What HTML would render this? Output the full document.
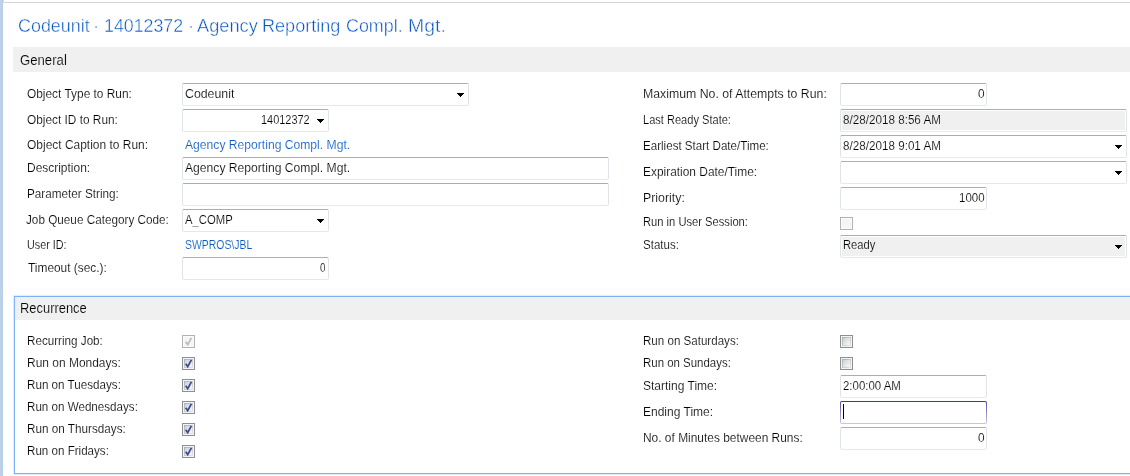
<!DOCTYPE html>
<html><head><meta charset="utf-8"><title>Job Queue Entry</title><style>
html,body{margin:0;padding:0;overflow:hidden}
.wrap{position:absolute;left:0;top:0;width:1130px;height:476px;overflow:hidden;background:#fff}
body{width:1130px;height:476px;background:#fff;overflow:hidden;position:relative;font-family:"Liberation Sans", sans-serif;}
.strip{position:absolute;left:0;top:0;width:3px;height:476px;background:linear-gradient(to right,#bdd1e8 0,#bdd1e8 2px,#b7cee9 2px,#b7cee9 3px)}
.topv{position:absolute;left:3px;top:0;width:1px;height:3px;background:#d9d9d9}
.toph{position:absolute;left:4px;top:2px;width:1126px;height:1px;background:#d5d5d5}
.bar{position:absolute;background:#f0f0f0}
.tl{position:absolute;left:0;top:0;width:1130px;height:476px;will-change:transform}
.rec{position:absolute;left:14px;top:296px;width:1130px;height:176px;border:1px solid #7db3f9;border-right:0;box-shadow:0 0 0 1px #e1edfe;box-sizing:content-box}
.t{position:absolute;white-space:pre;line-height:20px;transform-origin:0 0;letter-spacing:0}
.t{-webkit-text-stroke:0.15px #fff}
.t.title{-webkit-text-stroke-width:0.42px}
.t.ongray{-webkit-text-stroke-color:#f0f0f0}
.bx{position:absolute;box-sizing:border-box;background:#fff;border:1px solid #e1e3ea;border-top-color:#abadb3;border-bottom-color:#e3e9ef;border-radius:2px}
.bx.dis{background:#f0f0f0;box-shadow:inset 0 0 0 1px #fff}
.bx.foc{border-color:transparent;background:linear-gradient(#fff,#fff) padding-box,linear-gradient(to bottom,#3d3a90 0,#3d3a90 1px,#5957a6 2px,#c3c2e6 22px,#c9c8e8 23px) border-box}
.ar{position:absolute;display:block}
.caret{position:absolute;width:1px;height:15px;background:#000}
.cb{position:absolute;width:13px;height:13px;box-sizing:border-box;border:1px solid #8e8f8f;background:#f4f4f4}
.cb.on,.cb.off{background:#f4f4f4}
.cb.on::before,.cb.off::before{content:'';position:absolute;left:1px;top:1px;width:9px;height:9px;box-sizing:border-box;border:1px solid transparent;background:linear-gradient(135deg,#cdd1d6 0%,#e4e6e8 50%,#f7f7f7 100%) padding-box,linear-gradient(135deg,#a9aeb5 0%,#c3c6ca 45%,#e6e7e8 100%) border-box}
.cb.dis,.cb.dison{border-color:#b2b2b2;background:#f5f5f5;box-shadow:inset 0 0 0 1px #fbfbfb}
</style></head><body>
<div class="wrap">
<div class="strip"></div><div class="topv"></div><div class="toph"></div>
<div class="bar" style="left:13px;top:47px;width:1117px;height:25px"></div>
<div class="rec"></div>
<div class="bar" style="left:15px;top:297px;width:1115px;height:23px"></div>
<div class="bx " style="left:182px;top:83px;width:287px;height:23px"></div>
<svg class="ar" style="left:457px;top:93px" width="7" height="4" viewBox="0 0 7 4"><path d="M0 0H7V1H6V2H5V3H4V4H3V3H2V2H1V1H0Z" fill="#000" shape-rendering="crispEdges"/></svg>
<div class="bx " style="left:182px;top:109px;width:147px;height:23px"></div>
<svg class="ar" style="left:317px;top:119px" width="7" height="4" viewBox="0 0 7 4"><path d="M0 0H7V1H6V2H5V3H4V4H3V3H2V2H1V1H0Z" fill="#000" shape-rendering="crispEdges"/></svg>
<div class="bx " style="left:182px;top:157px;width:427px;height:23px"></div>
<div class="bx " style="left:182px;top:183px;width:427px;height:23px"></div>
<div class="bx " style="left:182px;top:209px;width:147px;height:23px"></div>
<svg class="ar" style="left:317px;top:219px" width="7" height="4" viewBox="0 0 7 4"><path d="M0 0H7V1H6V2H5V3H4V4H3V3H2V2H1V1H0Z" fill="#000" shape-rendering="crispEdges"/></svg>
<div class="bx " style="left:182px;top:257px;width:147px;height:23px"></div>
<div class="bx " style="left:840px;top:83px;width:147px;height:23px"></div>
<div class="bx dis" style="left:840px;top:109px;width:287px;height:23px"></div>
<div class="bx " style="left:840px;top:135px;width:287px;height:23px"></div>
<svg class="ar" style="left:1115px;top:145px" width="7" height="4" viewBox="0 0 7 4"><path d="M0 0H7V1H6V2H5V3H4V4H3V3H2V2H1V1H0Z" fill="#000" shape-rendering="crispEdges"/></svg>
<div class="bx " style="left:840px;top:161px;width:287px;height:23px"></div>
<svg class="ar" style="left:1115px;top:171px" width="7" height="4" viewBox="0 0 7 4"><path d="M0 0H7V1H6V2H5V3H4V4H3V3H2V2H1V1H0Z" fill="#000" shape-rendering="crispEdges"/></svg>
<div class="bx " style="left:840px;top:187px;width:147px;height:23px"></div>
<div class="bx dis" style="left:840px;top:235px;width:287px;height:23px"></div>
<svg class="ar" style="left:1115px;top:245px" width="7" height="4" viewBox="0 0 7 4"><path d="M0 0H7V1H6V2H5V3H4V4H3V3H2V2H1V1H0Z" fill="#000" shape-rendering="crispEdges"/></svg>
<div class="bx " style="left:840px;top:375px;width:147px;height:23px"></div>
<div class="bx foc" style="left:840px;top:401px;width:147px;height:23px"></div>
<div class="caret" style="left:843px;top:404px"></div>
<div class="bx " style="left:840px;top:427px;width:147px;height:23px"></div>
<div class="cb dis" style="left:840px;top:217px"></div>
<div class="cb dison" style="left:182px;top:335px"><svg width="13" height="13" viewBox="0 0 13 13" style="position:absolute;left:-1px;top:-1px"><path d="M3.7 6.7 L5.7 9.6 L9.4 2.8" fill="none" stroke="#bcbcbc" stroke-width="1.75" stroke-linecap="butt" stroke-linejoin="miter"/></svg></div>
<div class="cb on" style="left:182px;top:357px"><svg width="13" height="13" viewBox="0 0 13 13" style="position:absolute;left:-1px;top:-1px"><path d="M3.7 6.7 L5.7 9.6 L9.4 2.8" fill="none" stroke="#364a96" stroke-width="1.75" stroke-linecap="butt" stroke-linejoin="miter"/></svg></div>
<div class="cb on" style="left:182px;top:379px"><svg width="13" height="13" viewBox="0 0 13 13" style="position:absolute;left:-1px;top:-1px"><path d="M3.7 6.7 L5.7 9.6 L9.4 2.8" fill="none" stroke="#364a96" stroke-width="1.75" stroke-linecap="butt" stroke-linejoin="miter"/></svg></div>
<div class="cb on" style="left:182px;top:401px"><svg width="13" height="13" viewBox="0 0 13 13" style="position:absolute;left:-1px;top:-1px"><path d="M3.7 6.7 L5.7 9.6 L9.4 2.8" fill="none" stroke="#364a96" stroke-width="1.75" stroke-linecap="butt" stroke-linejoin="miter"/></svg></div>
<div class="cb on" style="left:182px;top:423px"><svg width="13" height="13" viewBox="0 0 13 13" style="position:absolute;left:-1px;top:-1px"><path d="M3.7 6.7 L5.7 9.6 L9.4 2.8" fill="none" stroke="#364a96" stroke-width="1.75" stroke-linecap="butt" stroke-linejoin="miter"/></svg></div>
<div class="cb on" style="left:182px;top:445px"><svg width="13" height="13" viewBox="0 0 13 13" style="position:absolute;left:-1px;top:-1px"><path d="M3.7 6.7 L5.7 9.6 L9.4 2.8" fill="none" stroke="#364a96" stroke-width="1.75" stroke-linecap="butt" stroke-linejoin="miter"/></svg></div>
<div class="cb off" style="left:840px;top:335px"></div>
<div class="cb off" style="left:840px;top:357px"></div>
<div class="tl">
<div class="t title" style="left:18.00px;top:15.69px;font-size:18.2px;color:#0756c3;transform:scaleX(0.9842)">Codeunit</div>
<div class="t title" style="left:93.00px;top:15.69px;font-size:18.2px;color:#0756c3;transform:scaleX(1.0000)">·</div>
<div class="t title" style="left:104.00px;top:15.69px;font-size:18.2px;color:#0756c3;transform:scaleX(0.9773)">14012372</div>
<div class="t title" style="left:188.00px;top:15.69px;font-size:18.2px;color:#0756c3;transform:scaleX(1.0000)">·</div>
<div class="t title" style="left:197.00px;top:15.69px;font-size:18.2px;color:#0756c3;transform:scaleX(1.0012)">Agency</div>
<div class="t title" style="left:262.00px;top:15.69px;font-size:18.2px;color:#0756c3;transform:scaleX(0.9943)">Reporting</div>
<div class="t title" style="left:346.00px;top:15.69px;font-size:18.2px;color:#0756c3;transform:scaleX(0.9836)">Compl.</div>
<div class="t title" style="left:408.00px;top:15.69px;font-size:18.2px;color:#0756c3;transform:scaleX(1.0708)">Mgt.</div>
<div class="t ongray" style="left:20.00px;top:50.15px;font-size:14px;color:#000;transform:scaleX(0.9399)">General</div>
<div class="t ongray" style="left:20.00px;top:298.15px;font-size:14px;color:#000;transform:scaleX(0.9219)">Recurrence</div>
<div class="t" style="left:27.00px;top:83.67px;font-size:12.5px;color:#000;transform:scaleX(0.9515)">Object Type to Run:</div>
<div class="t" style="left:27.00px;top:109.67px;font-size:12.5px;color:#000;transform:scaleX(0.9475)">Object ID to Run:</div>
<div class="t" style="left:27.00px;top:134.67px;font-size:12.5px;color:#000;transform:scaleX(0.9575)">Object Caption to Run:</div>
<div class="t" style="left:27.00px;top:157.67px;font-size:12.5px;color:#000;transform:scaleX(0.9562)">Description:</div>
<div class="t" style="left:27.00px;top:183.67px;font-size:12.5px;color:#000;transform:scaleX(0.9375)">Parameter String:</div>
<div class="t" style="left:26.00px;top:209.67px;font-size:12.5px;color:#000;transform:scaleX(0.9387)">Job Queue Category Code:</div>
<div class="t" style="left:27.00px;top:234.67px;font-size:12.5px;color:#000;transform:scaleX(0.8632)">User ID:</div>
<div class="t" style="left:28.00px;top:257.67px;font-size:12.5px;color:#000;transform:scaleX(0.9517)">Timeout (sec.):</div>
<div class="t" style="left:185.00px;top:83.67px;font-size:12.5px;color:#000;transform:scaleX(0.9860)">Codeunit</div>
<div class="t" style="left:261.00px;top:109.67px;font-size:12.5px;color:#000;transform:scaleX(0.8748)">14012372</div>
<div class="t" style="left:185.00px;top:134.67px;font-size:12.5px;color:#0657c2;transform:scaleX(0.9701)">Agency Reporting Compl. Mgt.</div>
<div class="t" style="left:185.00px;top:157.67px;font-size:12.5px;color:#000;transform:scaleX(0.9702)">Agency Reporting Compl. Mgt.</div>
<div class="t" style="left:185.00px;top:209.67px;font-size:12.5px;color:#000;transform:scaleX(0.9029)">A_COMP</div>
<div class="t" style="left:185.00px;top:234.67px;font-size:12.5px;color:#0657c2;transform:scaleX(0.8345)">SWPROS\JBL</div>
<div class="t" style="left:320.00px;top:257.67px;font-size:12.5px;color:#000;transform:scaleX(0.7803)">0</div>
<div class="t" style="left:643.00px;top:83.67px;font-size:12.5px;color:#000;transform:scaleX(0.9836)">Maximum No. of Attempts to Run:</div>
<div class="t" style="left:643.00px;top:109.67px;font-size:12.5px;color:#000;transform:scaleX(0.8850)">Last Ready State:</div>
<div class="t" style="left:643.00px;top:135.67px;font-size:12.5px;color:#000;transform:scaleX(0.9271)">Earliest Start Date/Time:</div>
<div class="t" style="left:643.00px;top:161.67px;font-size:12.5px;color:#000;transform:scaleX(0.9530)">Expiration Date/Time:</div>
<div class="t" style="left:643.00px;top:187.67px;font-size:12.5px;color:#000;transform:scaleX(0.9882)">Priority:</div>
<div class="t" style="left:643.00px;top:211.67px;font-size:12.5px;color:#000;transform:scaleX(0.8935)">Run in User Session:</div>
<div class="t" style="left:643.00px;top:234.67px;font-size:12.5px;color:#000;transform:scaleX(0.9230)">Status:</div>
<div class="t" style="left:978.00px;top:83.67px;font-size:12.5px;color:#000;transform:scaleX(0.9492)">0</div>
<div class="t ongray" style="left:843.00px;top:109.67px;font-size:12.5px;color:#000;transform:scaleX(0.9334)">8/28/2018 8:56 AM</div>
<div class="t" style="left:843.00px;top:135.67px;font-size:12.5px;color:#000;transform:scaleX(0.9335)">8/28/2018 9:01 AM</div>
<div class="t" style="left:959.00px;top:187.67px;font-size:12.5px;color:#000;transform:scaleX(0.9177)">1000</div>
<div class="t ongray" style="left:843.00px;top:234.67px;font-size:12.5px;color:#000;transform:scaleX(0.8954)">Ready</div>
<div class="t" style="left:27.00px;top:330.67px;font-size:12.5px;color:#000;transform:scaleX(0.9331)">Recurring Job:</div>
<div class="t" style="left:27.00px;top:352.67px;font-size:12.5px;color:#000;transform:scaleX(0.9573)">Run on Mondays:</div>
<div class="t" style="left:27.00px;top:374.67px;font-size:12.5px;color:#000;transform:scaleX(0.9316)">Run on Tuesdays:</div>
<div class="t" style="left:27.00px;top:396.67px;font-size:12.5px;color:#000;transform:scaleX(0.9294)">Run on Wednesdays:</div>
<div class="t" style="left:27.00px;top:418.67px;font-size:12.5px;color:#000;transform:scaleX(0.9379)">Run on Thursdays:</div>
<div class="t" style="left:27.00px;top:440.67px;font-size:12.5px;color:#000;transform:scaleX(0.9281)">Run on Fridays:</div>
<div class="t" style="left:643.00px;top:330.67px;font-size:12.5px;color:#000;transform:scaleX(0.9261)">Run on Saturdays:</div>
<div class="t" style="left:643.00px;top:352.67px;font-size:12.5px;color:#000;transform:scaleX(0.9158)">Run on Sundays:</div>
<div class="t" style="left:643.00px;top:375.67px;font-size:12.5px;color:#000;transform:scaleX(0.9607)">Starting Time:</div>
<div class="t" style="left:643.00px;top:401.67px;font-size:12.5px;color:#000;transform:scaleX(0.9607)">Ending Time:</div>
<div class="t" style="left:643.00px;top:427.67px;font-size:12.5px;color:#000;transform:scaleX(0.9542)">No. of Minutes between Runs:</div>
<div class="t" style="left:843.00px;top:375.67px;font-size:12.5px;color:#000;transform:scaleX(0.9151)">2:00:00 AM</div>
<div class="t" style="left:978.00px;top:427.67px;font-size:12.5px;color:#000;transform:scaleX(0.9492)">0</div>
</div>
</div>
</body></html>
